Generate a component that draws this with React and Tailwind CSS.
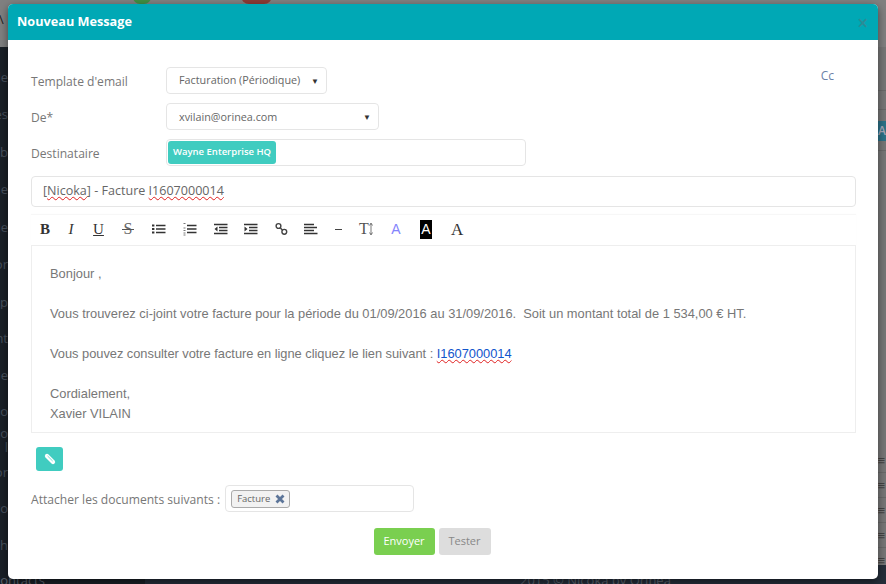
const BODY_LINK = "I1607000014";

const SIDE_ITEMS = [
  ["le", 23],
  ["es", 23],
  ["ab", 24],
  ["Me", 23],
  ["le", 24],
  ["or", 23],
  ["ap", 24],
  ["nt", 22],
  ["Me", 23],
  ["Mo", 22],
  ["o", 8],
  ["l", 0],
  ["or", 11],
  ["ro", 22],
  ["ch", 23],
];

const ROW_ICONS = [0, 1, 2, 3, 4];

function ToolIcon({ children, w = 14 }) {
  return (
    <svg width={w} height="16" viewBox={`0 0 ${w} 16`} fill="none" stroke="#444" className="block shrink-0">
      {children}
    </svg>
  );
}

function Toolbar() {
  const letter = "font-['Liberation_Serif',serif] text-[15px] leading-none text-[#333] text-center shrink-0";
  return (
    <div className="flex items-center h-[31px] border-b border-[#eeeeee] pl-[9px] pb-[2px] shadow-[0_-1px_1px_rgba(0,0,0,0.03)]">
      <span className={`${letter} font-bold w-[10px]`}>B</span>
      <span className={`${letter} italic ml-[17px] w-[8px]`}>I</span>
      <span className={`${letter} underline ml-[18px] w-[11px]`}>U</span>
      <span className={`${letter} relative ml-[18px] w-[12px] text-[16px] text-[#666]`}>
        S
        <span className="absolute left-0 right-0 top-[8px] h-px bg-[#555]" />
      </span>
      <div className="ml-[18px]">
        <ToolIcon>
          <path d="M0 4.5h2.4M0 8h2.4M0 11.5h2.4" strokeWidth="2.2" stroke="#333" />
          <path d="M4 4.5h9.5M4 8h9.5M4 11.5h9.5" strokeWidth="1.3" stroke="#333" />
        </ToolIcon>
      </div>
      <div className="ml-[17px]">
        <ToolIcon>
          <path d="M0.5 2.5h2M0.5 7h2M0.5 9.5h2M0.5 12h2M0.5 14h2" strokeWidth="1" stroke="#777" />
          <path d="M4 4.5h9.5M4 8h9.5M4 11.5h9.5" strokeWidth="1.3" stroke="#333" />
        </ToolIcon>
      </div>
      <div className="ml-[17px]">
        <ToolIcon>
          <path d="M0 3.5h13.5M5 6.5h8.5M5 9.5h8.5M0 12.5h13.5" strokeWidth="1.3" stroke="#333" />
          <path d="M3.5 5.5v5L0.5 8z" fill="#333" stroke="none" />
        </ToolIcon>
      </div>
      <div className="ml-[16px]">
        <ToolIcon>
          <path d="M0 3.5h13.5M5 6.5h8.5M5 9.5h8.5M0 12.5h13.5" strokeWidth="1.3" stroke="#333" />
          <path d="M0.5 5.5v5L3.5 8z" fill="#333" stroke="none" />
        </ToolIcon>
      </div>
      <div className="ml-[17px]">
        <ToolIcon w={13}>
          <circle cx="3.5" cy="5" r="2.4" strokeWidth="1.4" />
          <circle cx="9.3" cy="10.8" r="2.4" strokeWidth="1.4" />
          <path d="M5.4 6.9l2 2" strokeWidth="1.4" />
        </ToolIcon>
      </div>
      <div className="ml-[16px]">
        <ToolIcon>
          <path d="M0 3.5h10M0 6.5h13M0 9.5h10M0 12.5h13.5" strokeWidth="1.3" stroke="#333" />
        </ToolIcon>
      </div>
      <div className="ml-[16px]">
        <ToolIcon w={9}>
          <path d="M1 8.5h7" strokeWidth="1.2" />
        </ToolIcon>
      </div>
      <span className="ml-[16px] w-[13px] flex items-center shrink-0">
        <span className="font-['Liberation_Serif',serif] text-[16px] leading-none text-[#555]">T</span>
        <svg width="4" height="14" viewBox="0 0 4 14" stroke="#555" fill="none" className="shrink-0">
          <path d="M2 2v10M0.5 3.5L2 1l1.5 2.5M0.5 10.5L2 13l1.5-2.5" strokeWidth="0.8" />
        </svg>
      </span>
      <span className="ml-[19px] w-[10px] text-center font-['Liberation_Sans',sans-serif] text-[14px] text-[#8484fc] leading-none shrink-0">A</span>
      <span className="ml-[19px] w-[12px] h-[19px] bg-black text-white flex items-center justify-center font-['Liberation_Sans',sans-serif] text-[14px] leading-none shrink-0">
        A
      </span>
      <span className="ml-[19px] w-[12px] text-center font-['Liberation_Serif',serif] text-[17px] leading-none text-[#333] shrink-0">A</span>
    </div>
  );
}

export default function App() {
  return (
    <div className="relative w-[886px] h-[584px] overflow-hidden bg-[#777777] font-['Open_Sans',sans-serif]">
      <div className="flex flex-col h-full">
        <div className="h-[47px] shrink-0 bg-[#808080] flex items-start text-[14px] leading-none">
          <span className="ml-[-1px] mt-[13px] text-[13px] text-[#222]">\</span>
          <span className="ml-[129px] mt-[-10px] w-[18px] h-[14px] rounded-full bg-[#3f8f43]" />
          <span className="ml-[90px] mt-[-12px] w-[31px] h-[16px] rounded-full bg-[#8c3a35]" />
        </div>
        <div className="flex flex-1 min-h-0">
          <div className="w-[145px] bg-[#1a2027] flex flex-col text-[13px] leading-[14px] text-[#48515c]">
            {SIDE_ITEMS.map(([txt, gap], i) => (
              <div key={i} className="w-[8px] flex justify-end overflow-hidden" style={{ marginTop: gap }}>
                {txt}
              </div>
            ))}
          </div>
          <div className="flex-1 flex flex-col bg-[#777777]">
            <div className="h-[44px] shrink-0 border-b border-[#6a6a6a]" />
            <div className="h-[19px] shrink-0 border-b border-[#6a6a6a]" />
            <div className="h-[11px] shrink-0" />
            <div className="h-[20px] shrink-0 flex justify-end">
              <span className="w-[8px] bg-[#2c7288] text-[#aab] text-[12px] leading-[20px] font-semibold">A</span>
            </div>
            <div className="h-[10px] shrink-0 border-b border-[#6a6a6a]" />
            <div className="h-[297px] shrink-0" />
            {ROW_ICONS.map((i) => (
              <div key={i} className="h-[25px] shrink-0 border-b border-[#6a6a6a] flex justify-end items-center text-[13px] leading-none text-[#444] font-bold pr-[1px]">
                ≡
              </div>
            ))}
          </div>
        </div>
        <div className="h-[19px] shrink-0 flex text-[13px] leading-[30px] text-[#5d6570]">
          <div className="w-[145px] bg-[#1a2027] overflow-hidden flex justify-start">
            <span className="ml-[-6px]">contacts</span>
          </div>
          <div className="flex-1 bg-[#252e3a] overflow-hidden">
            <span className="ml-[375px] whitespace-nowrap">2015 © Nicoka by Orinea</span>
          </div>
        </div>
      </div>

      <div className="absolute left-[8px] top-[4px] w-[870px] h-[575px] rounded-[5px] bg-white overflow-hidden shadow-[0_3px_9px_rgba(0,0,0,0.5)]">
        <div className="h-[36px] bg-[#00a8b5] flex items-center justify-between pl-[9px] pr-[10px]">
          <span className="text-white font-bold text-[12.7px]">Nouveau Message</span>
          <span className="text-[#2b8c96] text-[19px] leading-none mt-[3px] font-semibold">×</span>
        </div>

        <div className="pl-[23px] pr-[22px]">
          <div className="flex items-center h-[27px] mt-[27px] relative">
            <label className="w-[135px] text-[12.1px] text-[#777] mt-[3px]">Template d'email</label>
            <div className="w-[161px] h-[27px] border border-[#e5e5e5] rounded-[4px] flex items-center justify-between pl-[12px] pr-[7px] text-[10.8px] text-[#666]">
              Facturation (Périodique)
              <span className="text-[8px] text-[#333]">▼</span>
            </div>
            <span className="absolute right-[22px] top-0 text-[12px] text-[#6b82a8]">Cc</span>
          </div>

          <div className="flex items-center h-[27px] mt-[9px]">
            <label className="w-[135px] text-[12.1px] text-[#777] mt-[3px]">De*</label>
            <div className="w-[213px] h-[27px] border border-[#e5e5e5] rounded-[4px] flex items-center justify-between pl-[12px] pr-[7px] text-[10.8px] text-[#666]">
              <span className="mt-[1px]">xvilain@orinea.com</span>
              <span className="text-[8px] text-[#333]">▼</span>
            </div>
          </div>

          <div className="flex items-center h-[27px] mt-[9px]">
            <label className="w-[135px] text-[12.1px] text-[#777] mt-[3px]">Destinataire</label>
            <div className="w-[360px] h-[27px] border border-[#e5e5e5] rounded-[4px] pl-[1px] pt-[1px] flex items-start">
              <span className="flex items-center h-[23px] px-[5px] rounded-[3px] bg-[#40ccc0] text-white text-[9.5px] font-semibold">
                Wayne Enterprise HQ
              </span>
            </div>
          </div>

          <div className="h-[31px] mt-[10px] border border-[#e5e5e5] rounded-[4px] flex items-center pl-[11px] text-[12.55px] text-[#666]">
            <span>
              [<span className="underline decoration-wavy decoration-[#e02020] decoration-1">Nicoka</span>] - Facture{" "}
              <span className="underline decoration-wavy decoration-[#e02020] decoration-1">I1607000014</span>
            </span>
          </div>

          <div className="mt-[8px]">
            <Toolbar />
            <div className="h-[187px] border border-t-0 border-[#eeeeee] pl-[18px] pt-[18px] font-['Liberation_Sans',sans-serif] text-[12.87px] leading-[20px] text-[#777]">
              <p>Bonjour ,</p>
              <p className="mt-[20px]">
                Vous trouverez ci-joint votre facture pour la période du 01/09/2016 au 31/09/2016.&nbsp; Soit un montant total de 1 534,00 € HT.
              </p>
              <p className="mt-[20px] tracking-[-0.03px]">
                Vous pouvez consulter votre facture en ligne cliquez le lien suivant :{" "}
                <span className="text-[#1155cc] underline decoration-wavy decoration-[#e02020] decoration-1">{BODY_LINK}</span>
              </p>
              <p className="mt-[20px]">Cordialement,</p>
              <p>Xavier VILAIN</p>
            </div>
          </div>

          <button className="mt-[14px] ml-[5px] w-[27px] h-[24px] rounded-[3px] bg-[#40ccc0] flex items-center justify-center text-white">
            <svg width="12" height="12" viewBox="0 0 12 12" fill="none" stroke="white" strokeLinecap="round">
              <path d="M3 3l6 6" strokeWidth="4.2" />
              <path d="M3.8 3.2l4.6 4.6" strokeWidth="0.7" stroke="#40ccc0" />
            </svg>
          </button>

          <div className="flex items-center mt-[14px]">
            <label className="text-[12.1px] text-[#777] mr-[5px] mt-[3px]">Attacher les documents suivants :</label>
            <div className="w-[189px] h-[27px] border border-[#e5e5e5] rounded-[4px] flex items-center pl-[5px]">
              <span className="flex items-center h-[18px] pl-[5px] pr-[4px] gap-[5px] border border-[#aaa] rounded-[3px] bg-[#f2f2f2] text-[9.5px] text-[#666]">
                <span className="mt-[1px]">Facture</span>
                <svg width="10" height="10" viewBox="0 0 10 10" stroke="#5c7599" strokeWidth="2.8" className="shrink-0">
                  <path d="M1.5 1.5l7 7M8.5 1.5l-7 7" />
                </svg>
              </span>
            </div>
          </div>

          <div className="flex justify-center gap-[4px] mt-[16px] pr-[23px]">
            <button className="w-[61px] h-[27px] rounded-[3px] bg-[#7acf50] text-white text-[11px]">Envoyer</button>
            <button className="w-[52px] h-[27px] rounded-[3px] bg-[#dddddd] text-[#888] text-[11px]">Tester</button>
          </div>
        </div>
      </div>
    </div>
  );
}
